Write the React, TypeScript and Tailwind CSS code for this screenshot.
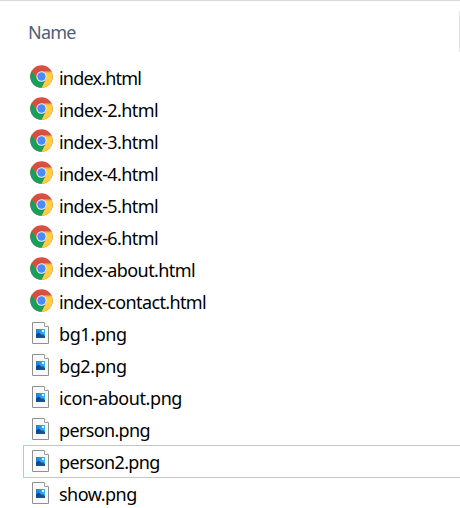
const files: { name: string; spacing: string }[] = [
  { name: 'index.html', spacing: 'tracking-[-0.8px]' },
  { name: 'index-2.html', spacing: 'tracking-[-0.6px]' },
  { name: 'index-3.html', spacing: 'tracking-[-0.6px]' },
  { name: 'index-4.html', spacing: 'tracking-[-0.6px]' },
  { name: 'index-5.html', spacing: 'tracking-[-0.6px]' },
  { name: 'index-6.html', spacing: 'tracking-[-0.6px]' },
  { name: 'index-about.html', spacing: 'tracking-[-0.6px]' },
  { name: 'index-contact.html', spacing: 'tracking-[-0.62px]' },
  { name: 'bg1.png', spacing: 'tracking-[-0.4px]' },
  { name: 'bg2.png', spacing: 'tracking-[-0.4px]' },
  { name: 'icon-about.png', spacing: 'tracking-[-0.42px]' },
  { name: 'person.png', spacing: 'tracking-[-0.65px]' },
  { name: 'person2.png', spacing: 'tracking-[-0.63px]' },
  { name: 'show.png', spacing: 'tracking-[-0.5px]' },
];

function ChromeIcon() {
  return (
    <svg viewBox="0 0 48 48" className="mt-1 mr-[-0.5px] ml-[6.5px] h-[23px] w-[23px] shrink-0">
      <circle cx="24" cy="24" r="23.5" fill="#db4f42" />
      <path d="M24 13.5H45A23.5 23.5 0 0 1 24 47.5L33.1 29.2Z" fill="#ffcd40" />
      <path d="M3.6 12.3A23.5 23.5 0 0 0 24 47.5L33.1 29.2L24 34L14.9 29.2Z" fill="#16a05d" />
      <path d="M24 13.5H45L43 17H27Z" fill="#000" opacity=".1" />
      <circle cx="24" cy="24" r="10.7" fill="#f1f1f1" />
      <circle cx="24" cy="24" r="8.7" fill="#4c8bf5" />
    </svg>
  );
}

function ImageIcon() {
  return (
    <svg viewBox="0 0 17 22" className="mt-[5px] mr-[3px] ml-[9px] h-[22px] w-[17px] shrink-0">
      <defs>
        <linearGradient id="sky" x1="0" y1="0" x2="1" y2="0">
          <stop offset="0" stopColor="#1b80d3" />
          <stop offset="1" stopColor="#35b9f0" />
        </linearGradient>
        <linearGradient id="hill" x1="0" y1="0" x2="1" y2="1">
          <stop offset="0" stopColor="#123a73" />
          <stop offset="1" stopColor="#1f55a5" />
        </linearGradient>
      </defs>
      <path d="M.5.5H12L16.5 5V21.5H.5Z" fill="#f9f9f9" stroke="#909090" />
      <path d="M12.5 .5V4.5H16.5" fill="#fff" stroke="#a0a0a0" />
      <rect x="4" y="7" width="9" height="9" fill="url(#sky)" />
      <path d="M4 12.5L6.7 10.5L9.8 13L11 12.2L13 14V16H4Z" fill="url(#hill)" />
      <rect x="10" y="8" width="2" height="2" fill="#e4f8ff" />
    </svg>
  );
}

export default function App() {
  return (
    <div className="h-[508px] w-[460px] overflow-hidden border-t border-[#d9d9d9] bg-white font-['Noto_Sans','Open_Sans',sans-serif] text-[18px] text-black">
      <div className="flex h-[60px] items-start justify-between">
        <span className="mt-[18px] ml-7 leading-[26px] tracking-[-0.8px] text-[#4c607a]">Name</span>
        <div className="mt-[10px] h-[41px] w-px bg-[#e5e5e5]" />
      </div>
      <div className="ml-[23px] flex flex-col">
        {files.map((file) => (
          <div
            key={file.name}
            className={`flex h-8 items-start ${file.name === 'person2.png' ? 'shadow-[inset_1px_1px_#99d1ff,0_1px_#99d1ff]' : ''}`}
          >
            {file.name.endsWith('.html') ? <ChromeIcon /> : <ImageIcon />}
            <span className={`mt-1 ml-[7px] leading-[26px] whitespace-nowrap ${file.spacing}`}>{file.name}</span>
          </div>
        ))}
      </div>
    </div>
  );
}
